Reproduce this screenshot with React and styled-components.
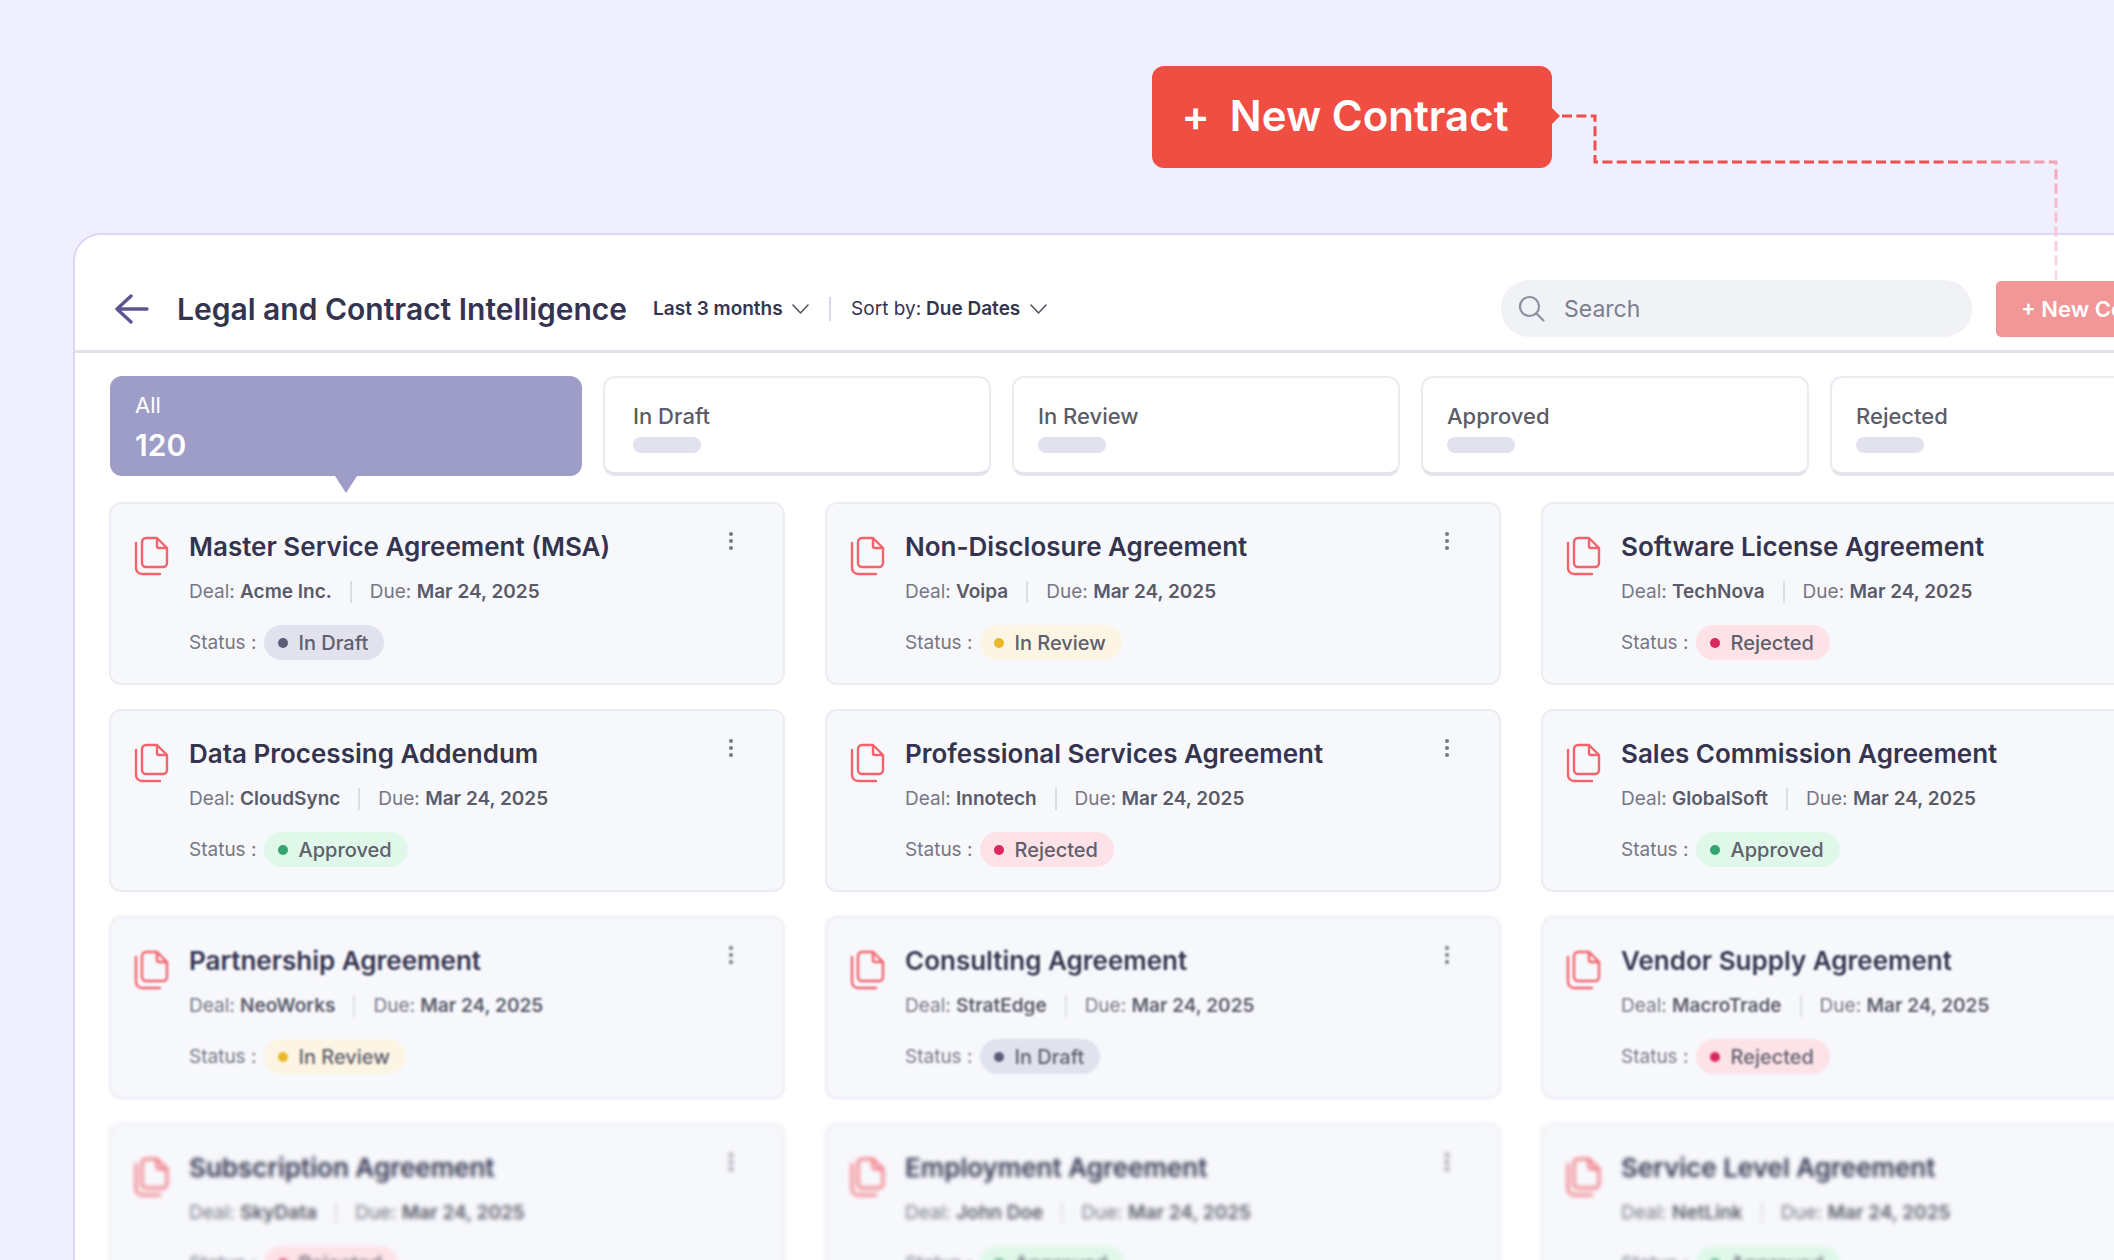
import { useState } from 'react';
import styled, { createGlobalStyle } from 'styled-components';

const GlobalStyle = createGlobalStyle`
	* {
		box-sizing: border-box;
	}

	body {
		margin: 0;
		background: #f0effd;
		color: #34344f;
		font-family: Inter, 'Liberation Sans', sans-serif;
	}

	button,
	input,
	select {
		font: inherit;
		color: inherit;
	}
`;

const TABS = [
	{ id: 'draft', label: 'In Draft', inset: 30 },
	{ id: 'review', label: 'In Review', inset: 26 },
	{ id: 'approved', label: 'Approved', inset: 26 },
	{ id: 'rejected', label: 'Rejected', inset: 26 },
];

const STATUS = {
	draft: { label: 'In Draft', dot: '#5b5d78', background: '#e1e2ee' },
	review: { label: 'In Review', dot: '#e9b829', background: '#fdf5e3' },
	approved: { label: 'Approved', dot: '#36a372', background: '#dff8e9' },
	rejected: { label: 'Rejected', dot: '#dc2860', background: '#fde2e8' },
};

const DUE_DATE = 'Mar 24, 2025';

// blur grows towards the bottom of the list
const ROWS = [
	{
		blur: 0,
		contracts: [
			{ title: 'Master Service Agreement (MSA)', deal: 'Acme Inc.', status: 'draft' },
			{ title: 'Non-Disclosure Agreement', deal: 'Voipa', status: 'review' },
			{ title: 'Software License Agreement', deal: 'TechNova', status: 'rejected' },
		],
	},
	{
		blur: 0,
		contracts: [
			{ title: 'Data Processing Addendum', deal: 'CloudSync', status: 'approved' },
			{ title: 'Professional Services Agreement', deal: 'Innotech', status: 'rejected' },
			{ title: 'Sales Commission Agreement', deal: 'GlobalSoft', status: 'approved' },
		],
	},
	{
		blur: 1,
		contracts: [
			{ title: 'Partnership Agreement', deal: 'NeoWorks', status: 'review' },
			{ title: 'Consulting Agreement', deal: 'StratEdge', status: 'draft' },
			{ title: 'Vendor Supply Agreement', deal: 'MacroTrade', status: 'rejected' },
		],
	},
	{
		blur: 2,
		contracts: [
			{ title: 'Subscription Agreement', deal: 'SkyData', status: 'rejected' },
			{ title: 'Employment Agreement', deal: 'John Doe', status: 'approved' },
			{ title: 'Service Level Agreement', deal: 'NetLink', status: 'approved' },
		],
	},
];

const Page = styled.div`
	height: 100vh;
	overflow: hidden;
`;

const CalloutBar = styled.div`
	display: flex;
	justify-content: flex-end;
	padding: 66px 562px 65px 0;
`;

const Callout = styled.div`
	position: relative;
	z-index: 1;
`;

const CalloutButton = styled.button`
	display: flex;
	align-items: center;
	justify-content: center;
	gap: 20px;
	width: 400px;
	height: 102px;
	padding: 0 14px 3px 0;
	border: 0;
	border-radius: 12px;
	background: #f04d43;
	color: #fff;
	font-size: 42px;
	font-weight: 600;
	white-space: nowrap;
`;

const ConnectorLine = styled.svg`
	position: absolute;
	top: 39px;
	left: 100%;
`;

const Panel = styled.main`
	margin: 0 -141px 0 73px;
	border: 2px solid #dad7fb;
	border-radius: 28px 28px 0 0;
	background: #fff;
`;

const Header = styled.header`
	display: flex;
	align-items: center;
	padding: 45px 35px 13px;
	border-bottom: 3px solid #e3e2ea;
`;

const BackButton = styled.button`
	display: flex;
	margin: 0 28px 0 5px;
	padding: 0;
	border: 0;
	background: none;
`;

const Title = styled.h1`
	margin: 0 26px 0 0;
	font-size: 30px;
	font-weight: 600;
	white-space: nowrap;
`;

const Filter = styled.label`
	display: flex;
	align-items: center;
	gap: 5px;
	font-size: 19px;
	white-space: nowrap;

	& select {
		padding: 0;
		border: 0;
		background: none;
		appearance: none;
		font-weight: 600;
	}

	& svg {
		margin: 2px 0 0 4px;
	}
`;

const FilterDivider = styled.span`
	width: 2px;
	height: 24px;
	margin: 0 20px;
	background: #d9d9e3;
`;

const SearchBox = styled.label`
	display: flex;
	align-items: center;
	gap: 18px;
	width: 471px;
	height: 57px;
	margin-left: auto;
	padding: 0 17px;
	border-radius: 28px;
	background: #f1f2f6;

	& input {
		flex: 1;
		min-width: 0;
		padding: 0;
		border: 0;
		outline: 0;
		background: none;
		font-size: 23px;
	}

	& input::placeholder {
		color: #7b7e8f;
		opacity: 1;
	}
`;

const NewButton = styled.button`
	width: 222px;
	height: 56px;
	margin-left: 24px;
	padding: 0 0 0 25px;
	border: 0;
	border-radius: 5px;
	background: #f19797;
	color: #fff;
	font-size: 22px;
	font-weight: 600;
	text-align: left;
	white-space: nowrap;
`;

const Tabs = styled.nav`
	display: grid;
	grid-template-columns: 472px repeat(4, 1fr);
	gap: 21px;
	padding: 23px 35px 26px;
`;

const Tab = styled.button`
	display: flex;
	flex-direction: column;
	align-items: flex-start;
	justify-content: center;
	gap: 9px;
	height: 100px;
	padding: 7px ${({ $inset }) => $inset - 2}px 0;
	border: 2px solid #ebebf2;
	border-bottom: 4px solid #e3e3ea;
	border-radius: 12px;
	background: #fff;
	color: #5c5c68;
	font-size: 22px;
	font-weight: 500;
	line-height: 24px;
`;

const CountPlaceholder = styled.span`
	width: 68px;
	height: 16px;
	border-radius: 8px;
	background: #e1e2ed;
`;

const AllTab = styled.button`
	position: relative;
	display: flex;
	flex-direction: column;
	align-items: flex-start;
	justify-content: center;
	gap: 8px;
	height: 100px;
	padding: 2px 25px 0;
	border: 0;
	border-radius: 12px;
	background: #9d9dc7;
	color: #fff;
	font-size: 22px;
	line-height: 28px;

	& strong {
		font-size: 30px;
		font-weight: 600;
		line-height: 36px;
	}

	&::after {
		content: '';
		position: absolute;
		top: 100%;
		left: 50%;
		border: 11px solid transparent;
		border-top: 17px solid #9d9dc7;
		border-bottom: 0;
		transform: translateX(-50%);
	}
`;

const ContractGrid = styled.section`
	display: grid;
	gap: 24px;
	padding: 0 36px 0 34px;
`;

const ContractRow = styled.div`
	display: grid;
	grid-template-columns: repeat(3, 1fr);
	gap: 40px;
	filter: ${({ $blur }) => ($blur ? `blur(${$blur}px)` : 'none')};
`;

const Card = styled.article`
	display: flex;
	align-items: flex-start;
	height: 183px;
	padding: 27px 49px 0 23px;
	border: 2px solid #ececf3;
	border-radius: 12px;
	background: #f7f8fc;

	& > svg {
		margin-top: 5px;
	}
`;

const CardBody = styled.div`
	flex: 1;
	margin-left: 20px;
`;

const CardTitle = styled.h2`
	margin: 0;
	font-size: 26px;
	font-weight: 600;
	line-height: 32px;
	white-space: nowrap;
`;

const CardMeta = styled.div`
	display: flex;
	align-items: center;
	margin-top: 17px;
	color: #777784;
	font-size: 19px;
	line-height: 24px;

	& b {
		color: #5a5a68;
		font-weight: 600;
	}
`;

const MetaDivider = styled.span`
	width: 2px;
	height: 22px;
	margin: 0 18px;
	background: #dddde6;
`;

const StatusLine = styled.div`
	display: flex;
	align-items: center;
	gap: 8px;
	margin-top: 21px;
	color: #777784;
	font-size: 19px;
`;

const StatusPill = styled.span`
	display: flex;
	align-items: center;
	gap: 10px;
	height: 35px;
	padding: 0 16px 0 14px;
	border-radius: 18px;
	background: ${({ $background }) => $background};
	color: #5f5f6d;
	font-size: 20px;
	font-weight: 500;

	&::before {
		content: '';
		width: 10px;
		height: 10px;
		border-radius: 50%;
		background: ${({ $dot }) => $dot};
	}
`;

const MenuButton = styled.button`
	display: flex;
	padding: 0;
	border: 0;
	background: none;
`;

const Connector = () => (
	<ConnectorLine width="520" height="180" viewBox="0 0 520 180" fill="none">
		<defs>
			<linearGradient id="fade" gradientUnits="userSpaceOnUse" x1="380" y1="57" x2="540" y2="150">
				<stop offset="0" stopColor="#f04d4f" />
				<stop offset="0.6" stopColor="#f3a9bb" />
				<stop offset="0.9" stopColor="#fbdfe6" />
			</linearGradient>
		</defs>
		<path d="M0 3L8 11L0 19Z" fill="#f04d43" />
		<path
			d="M10 11H43V57H504V175"
			stroke="url(#fade)"
			strokeWidth="3"
			strokeDasharray="10 4.4"
		/>
	</ConnectorLine>
);

const BackIcon = () => (
	<svg width="34" height="30" viewBox="0 0 34 30" fill="none">
		<path
			d="M16 2L2 15L16 28M2 15H32"
			stroke="#5c5690"
			strokeWidth="3.4"
			strokeLinecap="round"
			strokeLinejoin="round"
		/>
	</svg>
);

const ChevronIcon = () => (
	<svg width="17" height="11" viewBox="0 0 17 11" fill="none">
		<path
			d="M1 1L8.5 9L16 1"
			stroke="#55556a"
			strokeWidth="1.6"
			strokeLinecap="round"
			strokeLinejoin="round"
		/>
	</svg>
);

const SearchIcon = () => (
	<svg width="28" height="28" viewBox="0 0 28 28" fill="none">
		<circle cx="11.5" cy="11.5" r="9.5" stroke="#8c90a0" strokeWidth="2.2" />
		<path d="M18.5 18.5L25.5 25.5" stroke="#8c90a0" strokeWidth="2.2" strokeLinecap="round" />
	</svg>
);

const DocumentsIcon = () => (
	<svg width="35" height="40" viewBox="0 0 35 40" fill="none">
		<path
			d="M12 2H23L33 12V27A4 4 0 0 1 29 31H12A4 4 0 0 1 8 27V6A4 4 0 0 1 12 2Z"
			stroke="#f1646c"
			strokeWidth="2.4"
			strokeLinejoin="round"
		/>
		<path
			d="M23 2V10A2 2 0 0 0 25 12H33"
			stroke="#f1646c"
			strokeWidth="2.4"
			strokeLinejoin="round"
		/>
		<path
			d="M2 7V32A6 6 0 0 0 8 38H26"
			stroke="#f1646c"
			strokeWidth="2.4"
			strokeLinecap="round"
		/>
	</svg>
);

const KebabIcon = () => (
	<svg width="6" height="20" viewBox="0 0 6 20" fill="#777783">
		<circle cx="3" cy="3" r="2" />
		<circle cx="3" cy="10" r="2" />
		<circle cx="3" cy="17" r="2" />
	</svg>
);

const ContractCard = ({ title, deal, status }) => {
	const { label, dot, background } = STATUS[status];

	return (
		<Card>
			<DocumentsIcon />
			<CardBody>
				<CardTitle>{title}</CardTitle>
				<CardMeta>
					<span>
						Deal: <b>{deal}</b>
					</span>
					<MetaDivider />
					<span>
						Due: <b>{DUE_DATE}</b>
					</span>
				</CardMeta>
				<StatusLine>
					Status :
					<StatusPill $dot={dot} $background={background}>
						{label}
					</StatusPill>
				</StatusLine>
			</CardBody>
			<MenuButton type="button" aria-label="Menu">
				<KebabIcon />
			</MenuButton>
		</Card>
	);
};

const App = () => {
	const [search, setSearch] = useState('');

	return (
		<Page>
			<GlobalStyle />
			<CalloutBar>
				<Callout>
					<CalloutButton type="button">
						<span>+</span>
						<span>New Contract</span>
					</CalloutButton>
					<Connector />
				</Callout>
			</CalloutBar>
			<Panel>
				<Header>
					<BackButton type="button" aria-label="Back">
						<BackIcon />
					</BackButton>
					<Title>Legal and Contract Intelligence</Title>
					<Filter>
						<select aria-label="Period">
							<option>Last 3 months</option>
						</select>
						<ChevronIcon />
					</Filter>
					<FilterDivider />
					<Filter>
						Sort by:
						<select>
							<option>Due Dates</option>
						</select>
						<ChevronIcon />
					</Filter>
					<SearchBox>
						<SearchIcon />
						<input
							type="text"
							aria-label="Search"
							placeholder="Search"
							value={search}
							onChange={({ target }) => setSearch(target.value)}
						/>
					</SearchBox>
					<NewButton type="button">+ New Contract</NewButton>
				</Header>
				<Tabs>
					<AllTab type="button">
						All
						<strong>120</strong>
					</AllTab>
					{TABS.map(({ id, label, inset }) => (
						<Tab key={id} type="button" $inset={inset}>
							{label}
							<CountPlaceholder />
						</Tab>
					))}
				</Tabs>
				<ContractGrid>
					{ROWS.map(({ blur, contracts }, index) => (
						<ContractRow key={index} $blur={blur}>
							{contracts.map((contract) => (
								<ContractCard key={contract.title} {...contract} />
							))}
						</ContractRow>
					))}
				</ContractGrid>
			</Panel>
		</Page>
	);
};

export default App;
